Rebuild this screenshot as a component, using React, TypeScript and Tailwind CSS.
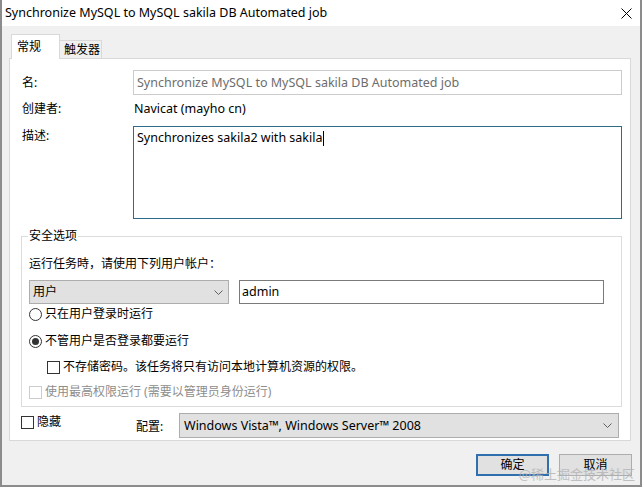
import React from "react";

const Chevron = () => (
	<svg width="9" height="5" viewBox="0 0 9 5" className="shrink-0">
		<path d="M0.5 0.5 L4.5 4.5 L8.5 0.5" fill="none" stroke="#606060" strokeWidth="1" />
	</svg>
);

const Radio = ({ checked }: { checked?: boolean }) => (
	<span className="w-[13px] h-[13px] rounded-full border border-[#333333] bg-white flex items-center justify-center shrink-0">
		{checked && <span className="w-[7px] h-[7px] rounded-full bg-[#333333]" />}
	</span>
);

const Check = ({ disabled }: { disabled?: boolean }) => (
	<span
		className={
			disabled
				? "w-[13px] h-[13px] border border-[#cccccc] bg-white shrink-0"
				: "w-[13px] h-[13px] border border-[#333333] bg-white shrink-0"
		}
	/>
);

export default function App() {
	return (
		<div className="w-[642px] h-[487px] bg-[#f0f0f0] border-x-2 border-b-2 border-[#8c8c8c] flex flex-col relative overflow-hidden text-[12px] leading-[18px] text-black font-['Noto_Sans','Noto_Sans_CJK_SC',sans-serif]">
			{/* title bar */}
			<div className="h-[26px] bg-white flex items-center justify-between pl-[3px] pr-[8px] shrink-0">
				<span className="text-[12.5px]">Synchronize MySQL to MySQL sakila DB Automated job</span>
				<svg width="11" height="11" viewBox="0 0 11 11">
					<path d="M0.5 0.5 L10.5 10.5 M10.5 0.5 L0.5 10.5" stroke="#000" strokeWidth="1" />
				</svg>
			</div>

			<div className="flex flex-col pl-[7px] pr-[9px]">
				{/* tabs */}
				<div className="mt-[8px] ml-[2px] flex items-end relative z-10 -mb-px">
					<div className="w-[49px] h-[25px] bg-white border-x border-t border-[#d9d9d9] pl-[5px] pt-[3px]">常规</div>
					<div className="w-[42px] h-[18px] mb-px bg-[#f0f0f0] border-t border-r border-[#d9d9d9] pl-[4px] leading-[17px]">
						触发器
					</div>
				</div>

				{/* panel */}
				<div className="bg-white border border-[#d9d9d9] pt-[11px] pl-[12px] pr-[8px] pb-[2px] flex flex-col">
					<div className="flex h-[25px]">
						<div className="w-[111px] flex items-center">名:</div>
						<div className="flex-1 border border-[#cccccc] pl-[3px] flex items-center text-[#6d6d6d] text-[12.5px]">
							Synchronize MySQL to MySQL sakila DB Automated job
						</div>
					</div>

					<div className="flex h-[20px] mt-[4px] items-center">
						<div className="w-[111px]">创建者:</div>
						<div className="pl-[1px] text-[12.5px]">Navicat (mayho cn)</div>
					</div>

					<div className="flex mt-[7px]">
						<div className="w-[111px] pt-[1px]">描述:</div>
						<div className="flex-1 h-[93px] border border-[#2d6d87] pl-[3px] pt-[2px] flex items-start text-[12.5px]">
							<span>Synchronizes sakila2 with sakila</span>
							<span className="w-px h-[15px] bg-black mt-[2px]" />
						</div>
					</div>

					{/* security options group */}
					<div className="mt-[17px] -ml-px border border-[#dcdcdc] flex flex-col pl-[7px] pb-[5px]">
						<span className="self-start -mt-[10px] -ml-px bg-white px-px">安全选项</span>
						<div className="mt-[10px]">运行任务時，请使用下列用户帐户：</div>
						<div className="mt-[7px] flex gap-[10px] h-[24px]">
							<div className="w-[200px] bg-[#e1e1e1] border border-[#adadad] pl-[3px] pr-[5px] flex items-center justify-between">
								<span>用户</span>
								<Chevron />
							</div>
							<div className="w-[365px] border border-[#7a7a7a] pl-[2px] flex items-center text-[12.5px]">admin</div>
						</div>
						<div className="mt-px h-[18px] flex items-center gap-[3px]">
							<Radio />
							<span>只在用户登录时运行</span>
						</div>
						<div className="mt-[9px] h-[18px] flex items-center gap-[3px]">
							<Radio checked />
							<span>不管用户是否登录都要运行</span>
						</div>
						<div className="mt-[8px] pl-[18px] h-[18px] flex items-center gap-[3px]">
							<Check />
							<span>不存储密码。该任务将只有访问本地计算机资源的权限。</span>
						</div>
						<div className="mt-[7px] h-[18px] flex items-center gap-[3px] text-[#8d8d8d]">
							<Check disabled />
							<span>使用最高权限运行 (需要以管理员身份运行)</span>
						</div>
					</div>

					{/* bottom row */}
					<div className="mt-[6px] flex items-start">
						<div className="-ml-px w-[115px] h-[18px] flex items-center gap-[3px]">
							<Check />
							<span>隐藏</span>
						</div>
						<div className="w-[43px] h-[25px] flex items-center pt-[2px]">配置:</div>
						<div className="flex-1 mr-[3px] h-[25px] bg-[#e1e1e1] border border-[#adadad] pl-[4px] pr-[6px] flex items-center justify-between">
							<span className="text-[12.5px]">Windows Vista™, Windows Server™ 2008</span>
							<Chevron />
						</div>
					</div>
				</div>
			</div>

			{/* buttons */}
			<div className="mt-[13px] flex justify-end gap-[10px] pr-[8px]">
				<button className="w-[73px] h-[22px] bg-[#e1e1e1] border-2 border-[#2f6fae] flex items-center justify-center">
					确定
				</button>
				<button className="w-[73px] h-[22px] bg-[#e1e1e1] border border-[#adadad] flex items-center justify-center">
					取消
				</button>
			</div>

			{/* watermark over the buttons */}
			<span className="absolute right-[5px] bottom-[2px] text-[13px] text-[#b4b4b4] opacity-80 font-['Noto_Sans_CJK_SC',serif]">
				@稀土掘金技术社区
			</span>
		</div>
	);
}
